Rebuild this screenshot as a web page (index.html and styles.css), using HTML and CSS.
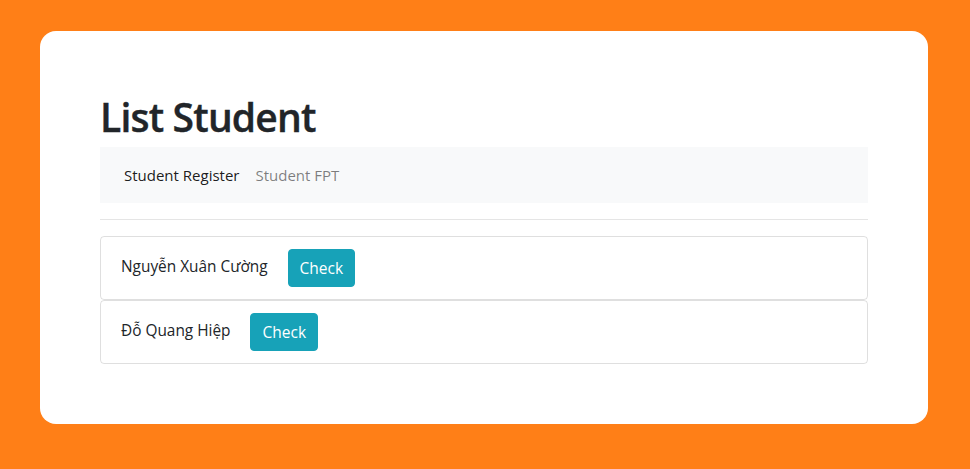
FILE: index.html
```html
<!DOCTYPE html>
<html lang="vi">
<head>
<meta charset="utf-8">
<title>List Student</title>
<link rel="stylesheet" href="styles.css">
</head>
<body>
<main class="panel">
  <h1 class="title">List Student</h1>
  <nav class="navbar">
    <a class="nav-link active">Student Register</a>
    <a class="nav-link">Student FPT</a>
  </nav>
  <hr class="divider">
  <ul class="students">
    <li class="student"><span class="name">Nguyễn Xuân Cường</span><button class="btn">Check</button></li>
    <li class="student"><span class="name">Đỗ Quang Hiệp</span><button class="btn">Check</button></li>
  </ul>
</main>
</body>
</html>
```
FILE: styles.css
```css
* { box-sizing: border-box; }
html, body { height: 100%; }
body {
  margin: 0;
  background: #ff7f17;
  font-family: "Open Sans", "Noto Sans", sans-serif;
  color: #212529;
  padding: 31px 42px 45px 40px;
}
.panel {
  background: #fff;
  border-radius: 16px;
  padding: 60px 60px 60px 60px;
  height: 393px;
}
.title {
  margin: 2px 0 6px;
  font-size: 39px;
  line-height: 48px;
  font-weight: 600;
  letter-spacing: -0.8px;
  -webkit-text-stroke: 0.4px #212529;
}
.navbar {
  display: flex;
  background: #f8f9fa;
  padding: 8px 16px;
  height: 56px;
}
.nav-link {
  padding: 8px;
  font-size: 15px;
  line-height: 24px;
  color: rgba(0,0,0,.5);
}
.nav-link.active { color: rgba(0,0,0,.9); }
.divider {
  margin: 16px 0;
  border: 0;
  border-top: 1px solid rgba(0,0,0,.1);
}
.students { list-style: none; margin: 0; padding: 0; }
.student {
  display: flex;
  align-items: center;
  height: 64px;
  padding: 12px 20px;
  border: 1px solid rgba(0,0,0,.125);
  border-radius: 4px;
  font-size: 15.4px;
}
.name { margin-right: 20px; position: relative; top: -2px; }
.btn {
  font-family: inherit;
  font-size: 15.5px;
  line-height: 24px;
  padding: 6px 11px;
  height: 38px;
  border: 1px solid #17a2b8;
  background: #17a2b8;
  color: #fff;
  border-radius: 4px;
}
```
